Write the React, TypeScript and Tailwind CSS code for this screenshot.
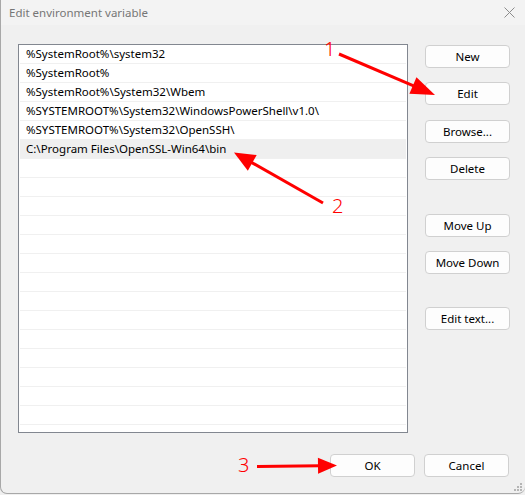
import React from "react";

const paths = [
  "%SystemRoot%\\system32",
  "%SystemRoot%",
  "%SystemRoot%\\System32\\Wbem",
  "%SYSTEMROOT%\\System32\\WindowsPowerShell\\v1.0\\",
  "%SYSTEMROOT%\\System32\\OpenSSH\\",
  "C:\\Program Files\\OpenSSL-Win64\\bin",
];

const TOTAL_ROWS = 21;

function Btn({ label, className = "" }: { label: string; className?: string }) {
  return (
    <button
      className={
        "h-[23px] w-[85px] rounded-[4px] border border-[#d0d0d0] bg-[#fdfdfd] text-[11.5px] text-black leading-none flex items-center justify-center " +
        className
      }
    >
      {label}
    </button>
  );
}

function Arrow({
  x1,
  y1,
  x2,
  y2,
  len = 22,
  half = 8.5,
}: {
  x1: number;
  y1: number;
  x2: number;
  y2: number;
  len?: number;
  half?: number;
}) {
  const dx = x2 - x1;
  const dy = y2 - y1;
  const d = Math.hypot(dx, dy);
  const ux = dx / d;
  const uy = dy / d;
  const bx = x2 - ux * len;
  const by = y2 - uy * len;
  const px = -uy;
  const py = ux;
  const pts = `${x2},${y2} ${bx + px * half},${by + py * half} ${bx - px * half},${by - py * half}`;
  return (
    <g>
      <line x1={x1} y1={y1} x2={bx + ux * 2} y2={by + uy * 2} stroke="#ff0000" strokeWidth={3} />
      <polygon points={pts} fill="#ff0000" />
    </g>
  );
}

export default function App() {
  const rows = Array.from({ length: TOTAL_ROWS }, (_, i) => paths[i] ?? "");
  return (
    <div
      className="relative w-[525px] h-[495px] overflow-hidden bg-[#f0f0f0]"
      style={{ fontFamily: '"Noto Sans", "Open Sans", sans-serif' }}
    >
      <div className="flex flex-col w-[525px] h-[494px] border-b border-l border-[#a8a8a8] rounded-bl-[7px] rounded-br-[7px]">
        {/* title bar */}
        <div className="h-[25px] bg-[#f3f3f3] flex items-center justify-between pl-[8px] pr-[10px]">
          <span className="text-[11.5px] text-[#767676]">Edit environment variable</span>
          <svg width="11" height="11" viewBox="0 0 11 11">
            <path d="M0.5 0.5 L10.5 10.5 M10.5 0.5 L0.5 10.5" stroke="#8c8c8c" strokeWidth="1" />
          </svg>
        </div>

        {/* content */}
        <div className="flex pt-[19px] pl-[17px] gap-[17px]">
          <div className="w-[390px] h-[389px] border border-[#828790] bg-white overflow-hidden px-[1px]">
            {rows.map((t, i) => (
              <div
                key={i}
                className={
                  "h-[19px] flex items-center pl-[6px] border-b border-[#f0f0f0] text-[11.5px] text-black whitespace-nowrap " +
                  (i === 5 ? "bg-[#efefef]" : "")
                }
              >
                {t}
              </div>
            ))}
          </div>
          <div className="flex flex-col pt-[1px]">
            <Btn label="New" />
            <Btn label="Edit" className="mt-[14px]" />
            <Btn label="Browse..." className="mt-[15px]" />
            <Btn label="Delete" className="mt-[14px]" />
            <Btn label="Move Up" className="mt-[34px]" />
            <Btn label="Move Down" className="mt-[14px]" />
            <Btn label="Edit text..." className="mt-[33px]" />
          </div>
        </div>

        {/* footer */}
        <div className="flex justify-end gap-[9px] pr-[16px] mt-[21px]">
          <Btn label="OK" />
          <Btn label="Cancel" />
        </div>
      </div>

      {/* resize grip */}
      <div className="absolute right-[3px] bottom-[4px] grid grid-cols-3 gap-[1px]">
        {[0, 0, 1, 0, 1, 1, 1, 1, 1].map((v, i) => (
          <div key={i} className={"w-[2px] h-[2px] " + (v ? "bg-[#b5b5b5]" : "bg-transparent")} />
        ))}
      </div>

      {/* callouts */}
      <svg className="absolute left-0 top-0 pointer-events-none" width="525" height="495">
        <Arrow x1={339} y1={54} x2={435} y2={95} len={24} half={9} />
        <Arrow x1={323} y1={203} x2={234} y2={152.5} len={21} half={9} />
        <Arrow x1={257} y1={466.5} x2={337} y2={465.5} len={19} half={8} />
      </svg>
      <span className="absolute left-[324px] top-[39px] text-[20px] font-light text-[#ff0000] leading-none">1</span>
      <span className="absolute left-[332px] top-[196px] text-[20px] font-light text-[#ff0000] leading-none">2</span>
      <span className="absolute left-[238px] top-[455px] text-[20px] font-light text-[#ff0000] leading-none">3</span>
    </div>
  );
}
